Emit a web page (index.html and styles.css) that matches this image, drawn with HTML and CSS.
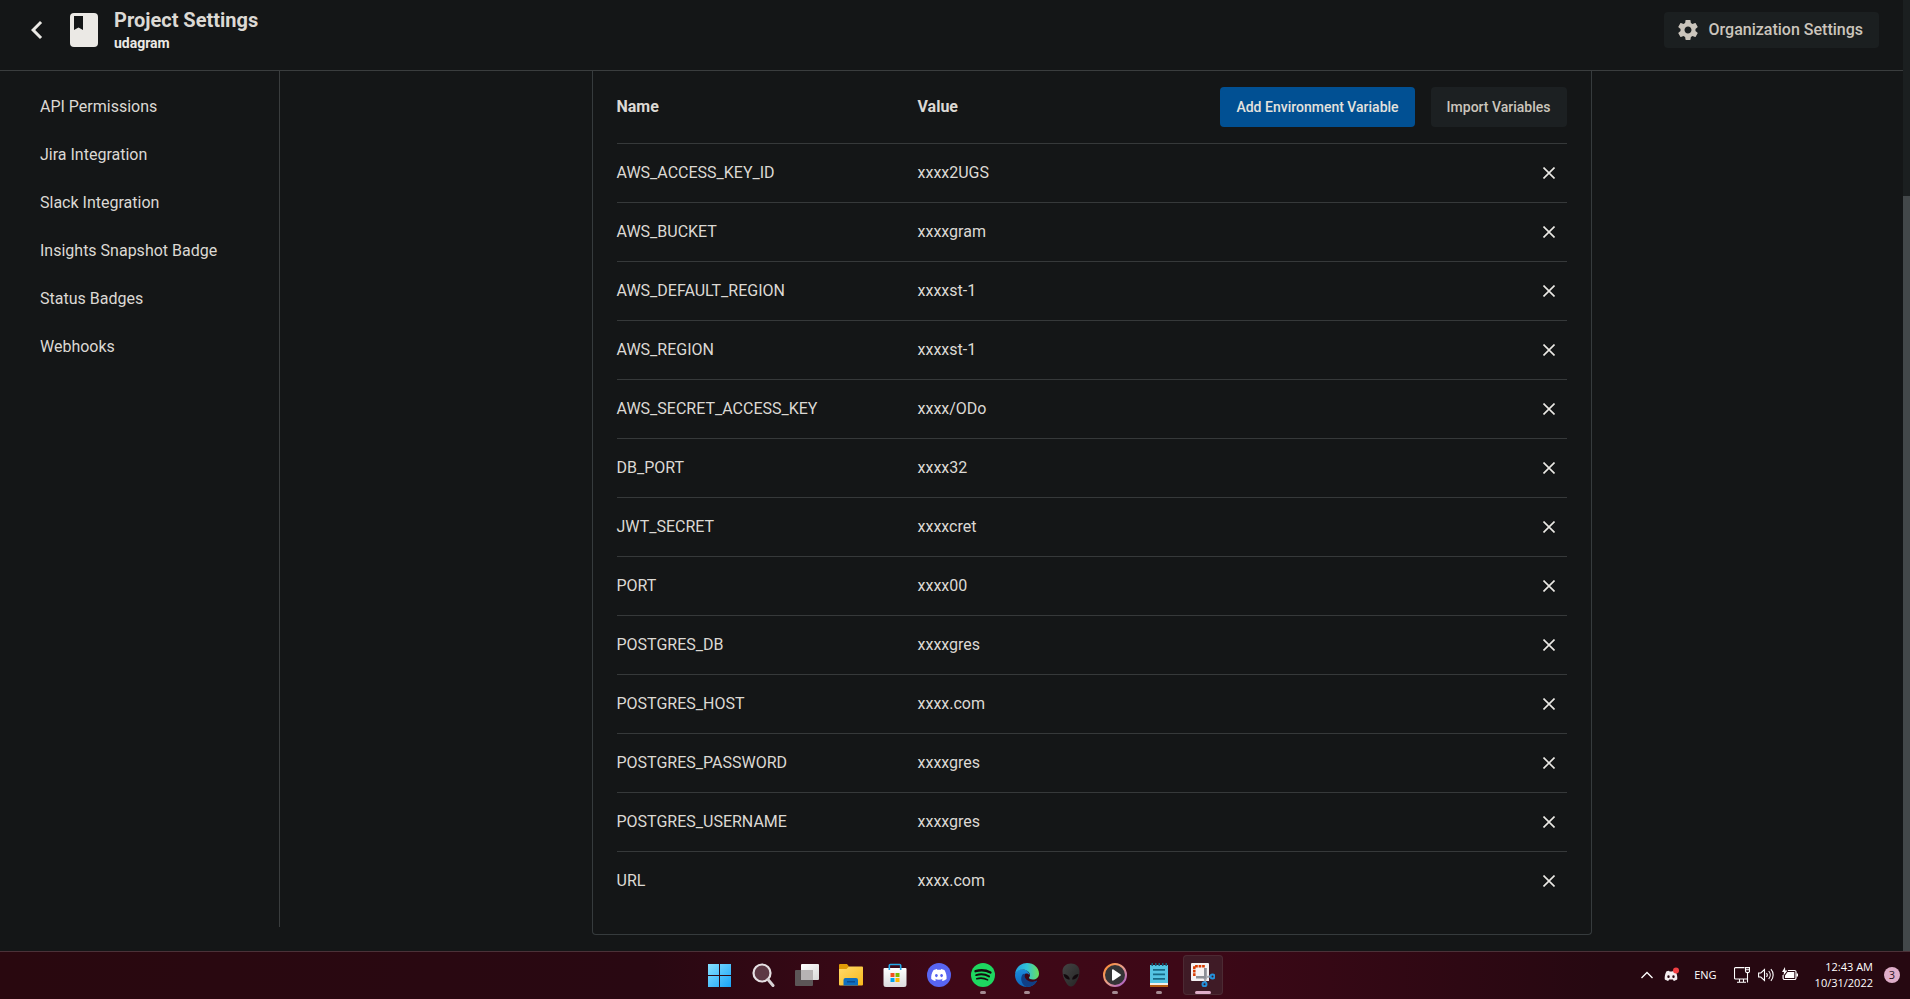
FILE: index.html
```html
<!DOCTYPE html>
<html lang="en">
<head>
<meta charset="utf-8">
<title>Project Settings - udagram</title>
<link rel="stylesheet" href="styles.css">
</head>
<body>
<div class="browser">
  <div class="page">
    <header class="topbar">
      <button class="back" aria-label="Back">
        <svg viewBox="0 0 24 24" width="36" height="36"><path fill="currentColor" d="M15.4 7.4 14 6l-6 6 6 6 1.4-1.4L10.8 12z"/></svg>
      </button>
      <svg class="project-icon" viewBox="0 0 28 34" width="28" height="34"><rect width="28" height="34" rx="4" fill="#ebe9e5"/><path fill="#141617" d="M4 3h9v14l-4.500-2.500L4 17z"/></svg>
      <div class="titles">
        <h1 class="title">Project Settings</h1>
        <p class="subtitle">udagram</p>
      </div>
      <button class="org-button">
        <svg viewBox="0 0 24 24" width="24" height="24"><path fill="currentColor" d="M19.430 12.980c.04-.32.07-.64.07-.98s-.03-.66-.07-.98l2.110-1.650c.19-.15.24-.42.12-.64l-2-3.460c-.12-.22-.39-.3-.61-.22l-2.490 1c-.52-.4-1.080-.73-1.690-.98l-.38-2.650C14.460 2.180 14.250 2 14 2h-4c-.25 0-.46.18-.49.42l-.38 2.650c-.61.25-1.170.59-1.690.98l-2.490-1c-.23-.09-.49 0-.61.22l-2 3.460c-.13.22-.07.49.12.64l2.110 1.650c-.04.32-.07.65-.07.98s.03.66.07.98l-2.110 1.650c-.19.15-.24.42-.12.64l2 3.460c.12.22.39.3.61.22l2.490-1c.52.4 1.080.73 1.690.98l.38 2.650c.03.24.24.42.49.42h4c.25 0 .46-.18.49-.42l.38-2.650c.61-.25 1.170-.59 1.690-.98l2.490 1c.23.09.49 0 .61-.22l2-3.460c.12-.22.07-.49-.12-.64l-2.110-1.650zM12 15.500c-1.930 0-3.500-1.570-3.500-3.500s1.570-3.500 3.500-3.500 3.500 1.570 3.500 3.500-1.570 3.500-3.500 3.500z"/></svg>
        <span>Organization Settings</span>
      </button>
    </header>
    <div class="body">
      <nav class="sidebar" aria-label="Project settings">
        <a href="#api">API Permissions</a>
        <a href="#jira">Jira Integration</a>
        <a href="#slack">Slack Integration</a>
        <a href="#insights">Insights Snapshot Badge</a>
        <a href="#status">Status Badges</a>
        <a href="#webhooks">Webhooks</a>
      </nav>
      <main class="content">
        <section class="card">
          <table class="vars">
            <colgroup><col class="col-name"><col class="col-value"><col></colgroup>
            <thead>
              <tr><th scope="col">Name</th><th scope="col">Value</th><td><div class="actions"><button class="btn primary">Add Environment Variable</button><button class="btn">Import Variables</button></div></td></tr>
            </thead>
            <tbody>
              <tr><td>AWS_ACCESS_KEY_ID</td><td>xxxx2UGS</td><td class="end"><button class="remove" aria-label="Remove AWS_ACCESS_KEY_ID"><svg viewBox="0 0 12 12" width="12" height="12"><path d="M.5.5l11 11M11.500.5l-11 11"/></svg></button></td></tr>
              <tr><td>AWS_BUCKET</td><td>xxxxgram</td><td class="end"><button class="remove" aria-label="Remove AWS_BUCKET"><svg viewBox="0 0 12 12" width="12" height="12"><path d="M.5.5l11 11M11.500.5l-11 11"/></svg></button></td></tr>
              <tr><td>AWS_DEFAULT_REGION</td><td>xxxxst-1</td><td class="end"><button class="remove" aria-label="Remove AWS_DEFAULT_REGION"><svg viewBox="0 0 12 12" width="12" height="12"><path d="M.5.5l11 11M11.500.5l-11 11"/></svg></button></td></tr>
              <tr><td>AWS_REGION</td><td>xxxxst-1</td><td class="end"><button class="remove" aria-label="Remove AWS_REGION"><svg viewBox="0 0 12 12" width="12" height="12"><path d="M.5.5l11 11M11.500.5l-11 11"/></svg></button></td></tr>
              <tr><td>AWS_SECRET_ACCESS_KEY</td><td>xxxx/ODo</td><td class="end"><button class="remove" aria-label="Remove AWS_SECRET_ACCESS_KEY"><svg viewBox="0 0 12 12" width="12" height="12"><path d="M.5.5l11 11M11.500.5l-11 11"/></svg></button></td></tr>
              <tr><td>DB_PORT</td><td>xxxx32</td><td class="end"><button class="remove" aria-label="Remove DB_PORT"><svg viewBox="0 0 12 12" width="12" height="12"><path d="M.5.5l11 11M11.500.5l-11 11"/></svg></button></td></tr>
              <tr><td>JWT_SECRET</td><td>xxxxcret</td><td class="end"><button class="remove" aria-label="Remove JWT_SECRET"><svg viewBox="0 0 12 12" width="12" height="12"><path d="M.5.5l11 11M11.500.5l-11 11"/></svg></button></td></tr>
              <tr><td>PORT</td><td>xxxx00</td><td class="end"><button class="remove" aria-label="Remove PORT"><svg viewBox="0 0 12 12" width="12" height="12"><path d="M.5.5l11 11M11.500.5l-11 11"/></svg></button></td></tr>
              <tr><td>POSTGRES_DB</td><td>xxxxgres</td><td class="end"><button class="remove" aria-label="Remove POSTGRES_DB"><svg viewBox="0 0 12 12" width="12" height="12"><path d="M.5.5l11 11M11.500.5l-11 11"/></svg></button></td></tr>
              <tr><td>POSTGRES_HOST</td><td>xxxx.com</td><td class="end"><button class="remove" aria-label="Remove POSTGRES_HOST"><svg viewBox="0 0 12 12" width="12" height="12"><path d="M.5.5l11 11M11.500.5l-11 11"/></svg></button></td></tr>
              <tr><td>POSTGRES_PASSWORD</td><td>xxxxgres</td><td class="end"><button class="remove" aria-label="Remove POSTGRES_PASSWORD"><svg viewBox="0 0 12 12" width="12" height="12"><path d="M.5.5l11 11M11.500.5l-11 11"/></svg></button></td></tr>
              <tr><td>POSTGRES_USERNAME</td><td>xxxxgres</td><td class="end"><button class="remove" aria-label="Remove POSTGRES_USERNAME"><svg viewBox="0 0 12 12" width="12" height="12"><path d="M.5.5l11 11M11.500.5l-11 11"/></svg></button></td></tr>
              <tr><td>URL</td><td>xxxx.com</td><td class="end"><button class="remove" aria-label="Remove URL"><svg viewBox="0 0 12 12" width="12" height="12"><path d="M.5.5l11 11M11.500.5l-11 11"/></svg></button></td></tr>
            </tbody>
          </table>
        </section>
      </main>
    </div>
  </div>
  <div class="scrollbar"><div class="thumb"></div></div>
</div>

<footer class="taskbar">
  <div class="apps">
    <button class="app" aria-label="Start">
      <svg viewBox="0 0 24 24" width="24" height="24"><defs><linearGradient id="win" x1="0" y1="0" x2="1" y2="1" ><stop offset="0" stop-color="#86e0ff"/><stop offset="1" stop-color="#18a4f8"/></linearGradient></defs><path fill="url(#win)" d="M1 1h11v11H1zM13 1h11v11H13zM1 13h11v11H1zM13 13h11v11H13z"/></svg>
    </button>
    <button class="app" aria-label="Search">
      <svg viewBox="0 0 24 24" width="24" height="24"><circle cx="11" cy="10" r="8.500" fill="#5d3844" stroke="#e6e0e3" stroke-width="2.200"/><path d="M17 16.500l5 6" stroke="#d8d2d5" stroke-width="3" stroke-linecap="round"/></svg>
    </button>
    <button class="app" aria-label="Task View">
      <svg viewBox="0 0 24 24" width="24" height="24"><defs><linearGradient id="tv" x1="0" y1="0" x2="1" y2="1"><stop offset="0" stop-color="#fff"/><stop offset="1" stop-color="#d8d8d8"/></linearGradient></defs><rect x="6" y="1" width="18" height="16" rx="1" fill="url(#tv)"/><rect y="7" width="18" height="16" rx="1" fill="#5c5657"/><path fill="#b7b3b4" d="M6 7h12v10H6z"/></svg>
    </button>
    <button class="app" aria-label="File Explorer">
      <svg viewBox="0 0 24 24" width="24" height="24"><defs><linearGradient id="fold" x1="0" y1="0" x2="1" y2="1"><stop offset="0" stop-color="#ffdb6b"/><stop offset="1" stop-color="#f8b81c"/></linearGradient></defs><path fill="#e09a06" d="M0 2a1 1 0 0 1 1-1h7l2 2.500V7H0z"/><path fill="url(#fold)" d="M0 6h7.500L10 3.500h13a1 1 0 0 1 1 1v17a1 1 0 0 1-1 1H1a1 1 0 0 1-1-1z"/><path fill="#0f6fc0" d="M4.500 17a2 2 0 0 1 2-2h10.500a2 2 0 0 1 2 2v5.500H4.500z"/><path fill="#0a4d91" d="M8 18h8v1.500H8z"/></svg>
    </button>
    <button class="app" aria-label="Microsoft Store">
      <svg viewBox="0 0 24 24" width="24" height="24"><defs><linearGradient id="store" x1="0" y1="0" x2="0" y2="1"><stop offset="0" stop-color="#fff"/><stop offset="1" stop-color="#dcdcdf"/></linearGradient></defs><path fill="url(#store)" d="M.5 6a1 1 0 0 1 1-1h21a1 1 0 0 1 1 1v15.500A2.500 2.500 0 0 1 21 24H3a2.500 2.500 0 0 1-2.500-2.500z"/><path d="M6.300 7V2.500a1 1 0 0 1 1-1h9.400a1 1 0 0 1 1 1V7" fill="none" stroke="#24a9e8" stroke-width="1.600"/><path fill="#f25022" d="M7.500 10h4v4h-4z"/><path fill="#7fba00" d="M12.500 10h4v4h-4z"/><path fill="#00a4ef" d="M7.500 15h4v4h-4z"/><path fill="#ffb900" d="M12.500 15h4v4h-4z"/></svg>
    </button>
    <button class="app" aria-label="Discord">
      <svg viewBox="0 0 24 24" width="24" height="24"><circle cx="12" cy="12" r="12" fill="#5865f2"/><g transform="translate(4.200 4.200) scale(.65)"><path fill="#fff" d="M20.317 4.370a19.800 19.800 0 0 0-4.885-1.515c-.2.370-.43.860-.61 1.250a18.300 18.300 0 0 0-5.487 0c-.17-.39-.4-.88-.62-1.250A19.700 19.700 0 0 0 3.677 4.370C.53 9.050-.32 13.600.1 18.100a19.900 19.900 0 0 0 6 3.030c.46-.63.87-1.300 1.220-2-.67-.25-1.300-.55-1.900-.9l.37-.3a14.200 14.200 0 0 0 12.100 0l.38.3c-.6.350-1.220.65-1.880.9.360.7.770 1.360 1.230 2a19.800 19.800 0 0 0 6-3.030c.5-5.200-.84-9.700-3.300-13.730zM8.020 15.330c-1.180 0-2.150-1.080-2.150-2.420s.95-2.420 2.150-2.420c1.210 0 2.180 1.100 2.160 2.420 0 1.340-.96 2.420-2.160 2.420zm7.970 0c-1.180 0-2.150-1.080-2.150-2.420s.95-2.420 2.150-2.420c1.210 0 2.180 1.100 2.160 2.420 0 1.340-.95 2.420-2.160 2.420z"/></g></svg>
    </button>
    <button class="app running" aria-label="Spotify">
      <svg viewBox="0 0 24 24" width="24" height="24"><circle cx="12" cy="12" r="12" fill="#1ed760"/><g fill="none" stroke="#150a0e" stroke-linecap="round"><path d="M4.500 8.200c5-1.500 10.800-1 15 1.300" stroke-width="2.300"/><path d="M5.200 12.100c4.500-1.300 9.300-.7 12.800 1.300" stroke-width="2"/><path d="M5.800 15.700c3.800-1 7.600-.6 10.800 1.200" stroke-width="1.600"/></g></svg>
    </button>
    <button class="app running" aria-label="Microsoft Edge">
      <svg viewBox="0 0 24 24" width="24" height="24"><defs><linearGradient id="e1" x1="0" y1="0" x2="1" y2="0"><stop offset="0" stop-color="#239fe0"/><stop offset=".5" stop-color="#31c3d8"/><stop offset="1" stop-color="#6bdf58"/></linearGradient><linearGradient id="e2" x1="0" y1="0" x2="0" y2="1"><stop offset="0" stop-color="#1c8bdd"/><stop offset="1" stop-color="#0d66bb"/></linearGradient></defs><path fill="url(#e2)" d="M0 12C.5 7.500 5 5.500 9 6.500c3.500.8 5.500 3 5.500 6-1-2-3-2.500-4.500-1.500-2.500 2-1 7 4 8 3 .6 5.500 0 8-1.300C20 21.500 16.500 24 12 24 5.400 24 0 18.600 0 12z"/><path fill="#103f86" d="M8 11c-3 3-2.500 10 3.500 13 4.500 0 8-2 10.500-5.800.2-.5-.2-.7-.6-.5-4.400 2-9.900.8-11.400-3.200-.5-1.500-.3-2.700.4-3.800z"/><path fill="url(#e1)" d="M0 11.500C.5 5 5.500 0 12 0c7 0 12 5 12 10.500 0 4-3 6-6 6-2.500 0-4-.8-4-1.700 0-.6 1-1 1-2.500 0-3.300-3.500-5.800-7.500-5.800-3.500 0-6.500 2-7.500 5z"/></svg>
    </button>
    <button class="app" aria-label="Alienware Command Center">
      <svg viewBox="0 0 24 24" width="24" height="24"><defs><linearGradient id="al" x1="0" y1="0" x2="1" y2="1"><stop offset="0" stop-color="#444"/><stop offset="1" stop-color="#252525"/></linearGradient></defs><path fill="url(#al)" d="M12 .5c5 0 8.500 3 8.500 8 0 4-1.500 8-3.500 11-1.500 2.500-3 4-5 4s-3.500-1.500-5-4c-2-3-3.500-7-3.500-11 0-5 3.500-8 8.500-8z"/><path fill="#12090d" d="M4.500 11c3.500.3 6 2.300 6.300 5.500-3 0-5.800-1.800-6.300-5.500zM19.500 11c-3.500.3-6 2.300-6.300 5.500 3 0 5.800-1.800 6.300-5.500z"/></svg>
    </button>
    <button class="app running" aria-label="Media Player">
      <svg viewBox="0 0 24 24" width="24" height="24"><defs><linearGradient id="mp" x1="0" y1="0" x2="1" y2="1"><stop offset="0" stop-color="#ff8a2a"/><stop offset=".5" stop-color="#e9a08c"/><stop offset="1" stop-color="#a055cf"/></linearGradient></defs><circle cx="12" cy="12" r="11" fill="#343436" stroke="url(#mp)" stroke-width="2"/><path fill="#fff" d="M9 7.200c0-.8.700-1.200 1.400-.8l7 4.800c.6.400.6 1.200 0 1.600l-7 4.800c-.7.400-1.400 0-1.400-.8z"/></svg>
    </button>
    <button class="app running" aria-label="Notepad">
      <svg viewBox="0 0 24 24" width="24" height="24"><path fill="#b65f13" d="M3 20h18v4H3z"/><path fill="#f3efe9" d="M3 19h18v3H3z"/><path fill="#55c4e3" d="M3 2h18v18H3z"/><path fill="#176a86" d="M6 6h12v1.800H6zM6 10.500h12v1.800H6zM6 15h12v1.800H6z"/><path fill="#145d78" d="M4.500 0H6v3H4.500zM8 0h1.500v3H8zM11.500 0H13v3h-1.500zM15 0h1.500v3H15zM18.500 0H20v3h-1.500z"/></svg>
    </button>
    <button class="app active" aria-label="Snipping Tool">
      <svg viewBox="0 0 24 24" width="24" height="24"><path fill="#f5f2f3" d="M1 0h16a1 1 0 0 1 1 1v17H1a1 1 0 0 1-1-1V1a1 1 0 0 1 1-1z"/><path fill="none" stroke="#d83b01" stroke-width="2.500" stroke-dasharray="2.700 .8" d="M3.300 13V3.300H14"/><path fill="#8c8f96" d="M13 5h2.800v10.500L14 18l-1.500-2.500H5V13h8z"/><path d="M15 14l4.500-.5M14.500 15.500L14 19" stroke="#a7a9b0" stroke-width="2"/><g fill="none" stroke="#2391dc" stroke-width="2"><circle cx="21.500" cy="13.500" r="2"/><circle cx="13.500" cy="21.300" r="2"/></g></svg>
    </button>
  </div>
  <div class="tray">
    <button class="tray-button" aria-label="Show hidden icons"><svg viewBox="0 0 12 8" width="12" height="8"><path d="M.5 7L6 1.500 11.500 7" fill="none" stroke="#fff" stroke-width="1.300"/></svg></button>
    <button class="tray-button" aria-label="Discord"><svg viewBox="0 0 16 16" width="16" height="16"><path fill="#f3edf0" fill-rule="evenodd" d="M3.500 4.300 6 3.700l.6.800h2.800l.6-.8 2.500.6c1.300 2.400 2 5 1.800 8-1.200 1-2.400 1.400-3.500 1.600l-.9-1.300H6.100l-.9 1.300c-1.100-.2-2.300-.6-3.500-1.600-.2-3 .5-5.600 1.800-8zm2 4a1.200 1.400 0 1 0 0 2.800 1.200 1.400 0 0 0 0-2.800zm5 0a1.200 1.400 0 1 0 0 2.800 1.200 1.400 0 0 0 0-2.800z"/><circle cx="13" cy="3.500" r="3" fill="#f23f43"/></svg></button>
    <button class="tray-button lang">ENG</button>
    <button class="tray-button status" aria-label="Network, volume and battery">
      <svg viewBox="0 0 16 16" width="16" height="16" fill="none" stroke="#fff" stroke-width="1.100"><path d="M10.500.6H1.500a1 1 0 0 0-1 1v9.400a1 1 0 0 0 1 1H13M5.500 12v3M9.500 12v3M3 15.300h9M11.500.6h4v3.500a1.500 1.500 0 0 1-1.500 1.500h-1a1.500 1.500 0 0 1-1.500-1.500zM13.500 5.600v9.800M11.500 2.700h4"/></svg>
      <svg viewBox="0 0 16 16" width="16" height="16" fill="none" stroke="#fff" stroke-width="1.100"><path d="M.6 6h2.200l3.700-3.500v11L2.800 10H.6zM8.500 6c.9 1.100.9 2.900 0 4M10.700 4c2 2.300 2 5.700 0 8M12.900 2.200c3 3.300 3 8.300 0 11.600"/></svg>
      <svg viewBox="0 0 16 16" width="16" height="16"><path fill="none" stroke="#fff" stroke-width="1.200" d="M6 3.500h6.500A1.500 1.500 0 0 1 14 5v6a1.500 1.500 0 0 1-1.500 1.500H2.600A1.500 1.500 0 0 1 1.100 11V8"/><path fill="#fff" d="M5.500 5h6.800v6H3V8.500zM14.500 6.500h1.500v3h-1.500zM3 0 0 5h2L1.500 8.500 5.500 3.500H3.200z"/></svg>
    </button>
    <button class="tray-button clock"><span>12:43 AM</span><span>10/31/2022</span></button>
    <span class="count">3</span>
  </div>
</footer>
</body>
</html>
```
FILE: styles.css
```css
* {
  box-sizing: border-box;
}

body {
  margin: 0;
  height: 100vh;
  display: flex;
  flex-direction: column;
  overflow: hidden;
  background: #141617;
  color: #dcd9d4;
  font: 16px/20px Roboto, "Liberation Sans", sans-serif;
}

button {
  margin: 0;
  padding: 0;
  border: 0;
  background: none;
  color: inherit;
  font: inherit;
  cursor: pointer;
}

svg {
  display: block;
  flex: none;
}

.browser {
  flex: 1;
  min-height: 0;
  display: flex;
}

.page {
  flex: 1;
  min-width: 0;
  display: flex;
  flex-direction: column;
}

.topbar {
  display: flex;
  align-items: center;
  padding: 7px 24px 17px 19px;
  border-bottom: 1px solid #3a3d3e;
}

.back {
  color: #ebe9e5;
}

.project-icon {
  margin: 0 16px 0 15px;
}

.titles {
  flex: 1;
}

.title,
.subtitle {
  margin: 0;
}

.title {
  font-size: 20px;
  line-height: 26px;
  font-weight: 700;
}

.subtitle {
  color: #ebe9e5;
  font-size: 14px;
  font-weight: 700;
}

.org-button {
  display: flex;
  align-items: center;
  gap: 9px;
  height: 36px;
  padding: 0 16px 0 12px;
  border-radius: 4px;
  background: #1b1f20;
  color: #cbc5bc;
  font-weight: 500;
}

.body {
  flex: 1;
  display: grid;
  grid-template-columns: 280px 1fr;
}

.sidebar {
  display: flex;
  flex-direction: column;
  gap: 28px;
  margin-bottom: 24px;
  padding: 26px 40px 0;
  border-right: 1px solid #3a3d3e;
}

.sidebar a {
  color: inherit;
  text-decoration: none;
}

.card {
  max-width: 1000px;
  margin: 0 auto;
  padding: 0 24px 24px;
  border: 1px solid #363b3d;
  border-top: 0;
  border-radius: 0 0 4px 4px;
}

.vars {
  width: 100%;
  table-layout: fixed;
  border-collapse: separate;
  border-spacing: 0;
}

.col-name {
  width: 301px;
}

.col-value {
  width: 280px;
}

.vars th,
.vars td {
  padding: 0;
  border-bottom: 1px solid #36393a;
  text-align: left;
}

.vars th {
  font-weight: 700;
}

.vars thead td {
  height: 73px;
}

.vars tbody td {
  height: 59px;
}

.vars tbody tr:last-child td {
  height: 58px;
  border-bottom: 0;
}

.actions {
  display: flex;
  justify-content: flex-end;
  gap: 16px;
}

.btn {
  height: 40px;
  padding: 0 16px 1px;
  border-radius: 4px;
  background: #1c2022;
  color: #cbc5bc;
  font-size: 14px;
  font-weight: 500;
  white-space: nowrap;
}

.btn.primary {
  background: #015093;
  color: #e4e2de;
}

.vars .end {
  padding-right: 6px;
}

.remove {
  display: block;
  margin-left: auto;
  padding: 6px;
}

.remove path {
  fill: none;
  stroke: #ebe9e5;
  stroke-width: 1.6;
}

.scrollbar {
  width: 7px;
  padding-top: 196px;
  display: flex;
  background: #1b1f20;
}

.thumb {
  flex: 1;
  background: #43484a;
}

.taskbar {
  display: grid;
  grid-template-columns: minmax(0, 1fr) auto minmax(0, 1fr);
  align-items: center;
  height: 48px;
  padding: 0 0 1px 11px;
  border-top: 1px solid #4b3138;
  background: linear-gradient(90deg, #29080f 0%, #290812 34%, #3f0817 50%, #3d0817 62%, #260811 84%, #260811 100%);
  color: #fff;
}

.apps {
  grid-column: 2;
  display: flex;
  gap: 4px;
}

.app {
  position: relative;
  display: flex;
  align-items: center;
  justify-content: center;
  width: 40px;
  height: 40px;
  border-radius: 4px;
}

.app.active {
  background: #3f1b26;
  box-shadow: inset 0 0 0 1px #4c2a33;
}

.running::after,
.active::after {
  content: "";
  position: absolute;
  bottom: 1px;
  left: 50%;
  width: 6px;
  height: 3px;
  margin-left: -3px;
  border-radius: 2px;
  background: #a58b93;
}

.active::after {
  width: 16px;
  margin-left: -8px;
  background: #dfadc9;
}

.tray {
  display: flex;
  align-items: center;
  justify-content: flex-end;
  padding-right: 10px;
  font: 11px/16px "Open Sans", "Noto Sans", sans-serif;
}

.tray-button {
  margin-right: 10px;
}

.lang {
  margin: 0 17px 0 5px;
}

.status {
  display: flex;
  gap: 8px;
  margin-right: 17px;
}

.clock {
  display: flex;
  flex-direction: column;
  align-items: flex-end;
  margin-right: 11px;
}

.count {
  width: 16px;
  border-radius: 8px;
  background: #dfadc9;
  color: #2a1019;
  font-size: 11px;
  text-align: center;
}
```
